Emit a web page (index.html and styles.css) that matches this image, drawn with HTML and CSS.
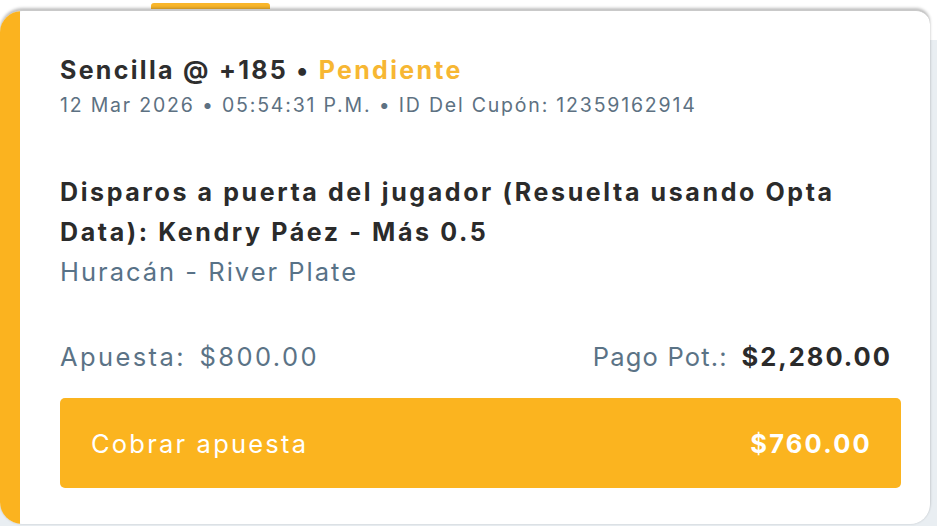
FILE: index.html
```html
<!DOCTYPE html>
<html lang="es">
<head>
<meta charset="utf-8">
<link rel="stylesheet" href="styles.css">
</head>
<body>
<div class="page">
  <div class="tabs"><div class="tab-active"></div></div>
  <div class="card">
    <div class="accent"></div>
    <div class="content">
      <div class="head">
        <div class="title">Sencilla @ +185 <span class="dot">•</span> <span class="status">Pendiente</span></div>
        <div class="meta">12 Mar 2026 • 05:54:31 P.M. • ID Del Cupón: 12359162914</div>
      </div>
      <div class="market">Disparos a puerta del jugador (Resuelta usando Opta Data): Kendry Páez - Más 0.5</div>
      <div class="event">Huracán - River Plate</div>
      <div class="amounts">
        <div class="stake"><span class="label">Apuesta:</span> <span class="val">$800.00</span></div>
        <div class="payout"><span class="label">Pago Pot.:</span> <span class="val-strong">$2,280.00</span></div>
      </div>
      <button class="cashout"><span>Cobrar apuesta</span><span class="cash-val">$760.00</span></button>
    </div>
  </div>
</div>
</body>
</html>
```
FILE: styles.css
```css
* { box-sizing: border-box; }
html, body { margin: 0; padding: 0; }
body {
  width: 937px;
  height: 526px;
  overflow: hidden;
  background: #e9eef2;
  font-family: "Inter", "Noto Sans", sans-serif;
}
.page {
  display: flex;
  flex-direction: column;
  height: 526px;
  background: linear-gradient(#ffffff 0 40px, #e9eef2 40px);
}
.tabs {
  height: 10px;
  background: #fff;
  padding-left: 151px;
  display: flex;
  align-items: flex-start;
  padding-top: 3px;
}
.tab-active {
  width: 119px;
  height: 6px;
  background: #f9b62a;
  border-radius: 3px 3px 0 0;
}
.card {
  flex: 1;
  display: flex;
  margin-right: 7px;
  margin-bottom: 2px;
  background: #fff;
  border-radius: 22px 14px 20px 22px;
  box-shadow: 0 -2px 3px rgba(0,0,0,0.25), 0 1px 2px rgba(0,0,0,0.06);
  overflow: hidden;
  border-top: 1px solid #c9c9c9;
}
.accent {
  width: 20px;
  background: #fbb31f;
  flex: none;
}
.content {
  flex: 1;
  padding: 42px 29px 0 40px;
  display: flex;
  flex-direction: column;
}
.title {
  font-size: 25px;
  font-weight: 700;
  color: #2e2e2e;
  line-height: 34px;
  letter-spacing: 2.3px;
  white-space: nowrap;
}
.status { color: #f7b733; }
.meta {
  margin-top: 5px;
  font-size: 19.5px;
  color: #5d7182;
  line-height: 26px;
  letter-spacing: 1.8px;
  white-space: nowrap;
}
.market {
  margin-top: 54px;
  font-size: 25px;
  font-weight: 700;
  color: #2b2b2b;
  line-height: 40px;
  letter-spacing: 2.6px;
  padding-right: 20px;
}
.event {
  font-size: 25.5px;
  color: #587287;
  line-height: 40px;
  letter-spacing: 2px;
}
.amounts {
  margin-top: 47px;
  display: flex;
  justify-content: space-between;
  align-items: center;
  padding-right: 9px;
  font-size: 25.5px;
  line-height: 36px;
  color: #5b7386;
  letter-spacing: 2.4px;
}
.stake .label { margin-right: 4px; }
.payout .label { margin-right: 4px; letter-spacing: 1.2px; }
.val-strong { font-weight: 700; color: #2b2b2b; letter-spacing: 2px; }
.cashout {
  margin-top: 23px;
  height: 90px;
  width: 841px;
  border: none;
  border-radius: 5px;
  background: #fbb41f;
  color: #fff;
  font-family: inherit;
  font-size: 25.5px;
  letter-spacing: 2.2px;
  display: flex;
  justify-content: space-between;
  align-items: center;
  padding: 0 29px 0 31px;
}
.cash-val { font-weight: 700; }
```
